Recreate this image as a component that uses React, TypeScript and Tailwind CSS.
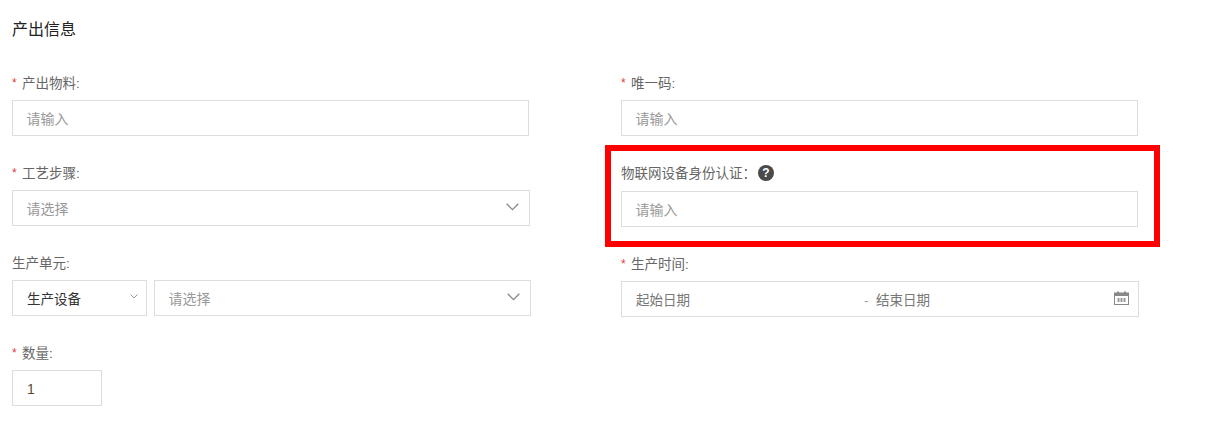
type FieldProps = {
  label: string;
  required?: boolean;
  help?: boolean;
  className?: string;
  children: React.ReactNode;
};

function Field({ label, required, help, className, children }: FieldProps) {
  return (
    <div className={className}>
      <div className="h-[18px] mb-2 pt-[2px] flex items-center text-[13.5px] leading-[18px] text-[#666]">
        {required && <span className="w-[10px] mb-[3px] text-[#e4393c] text-xs">*</span>}
        <span>{label}</span>
        {help && (
          <span className="ml-[2px] mb-[2px] w-4 h-4 rounded-full bg-[#4a4a4a] text-white text-xs font-bold flex items-center justify-center">
            ?
          </span>
        )}
      </div>
      {children}
    </div>
  );
}

function Box({ className, children }: { className?: string; children?: React.ReactNode }) {
  return (
    <div className={`h-9 pt-1 border border-[#ddd] bg-white flex items-center ${className ?? ""}`}>
      {children}
    </div>
  );
}

function Hint({ text }: { text: string }) {
  return <span className="mb-[2px] text-sm text-[#999]">{text}</span>;
}

function Chevron({ small }: { small?: boolean }) {
  return small ? (
    <svg width="8" height="5" viewBox="0 0 8 5" fill="none" stroke="#999" strokeWidth="1" className="mb-[7px]">
      <path d="M0.5 0.5L4 4l3.5-3.5" />
    </svg>
  ) : (
    <svg width="13" height="8" viewBox="0 0 13 8" fill="none" stroke="#888" strokeWidth="1.3" className="mb-[6px]">
      <path d="M0.7 0.8L6.5 6.6l5.8-5.8" />
    </svg>
  );
}

function CalendarIcon() {
  return (
    <svg width="15" height="14" viewBox="0 0 15 14" fill="none" className="mb-[7px]">
      <rect x="0.5" y="2" width="14" height="11.5" stroke="#888" />
      <rect x="0.5" y="2" width="14" height="3" fill="#888" />
      <rect x="3" y="0.5" width="2" height="2" fill="#888" />
      <rect x="10" y="0.5" width="2" height="2" fill="#888" />
      <rect x="3.5" y="7" width="2" height="4" fill="#999" />
      <rect x="6.5" y="7" width="2" height="4" fill="#999" />
      <rect x="9.5" y="7" width="2" height="4" fill="#999" />
    </svg>
  );
}

export default function App() {
  return (
    <div className="relative h-[432px] w-[1206px] overflow-hidden bg-white font-['Liberation_Sans','Noto_Sans_CJK_SC',sans-serif]">
      <div className="pt-5 pl-3 h-[74px] text-base leading-5 text-[#222]">产出信息</div>
      <div className="flex">
        <div className="w-[621px] pl-3">
          <Field label="产出物料:" required className="mb-7">
            <Box className="w-[517px] pl-[13.5px]"><Hint text="请输入" /></Box>
          </Field>
          <Field label="工艺步骤:" required className="mb-7">
            <Box className="w-[518px] pl-[13.5px] pr-[10px] justify-between">
              <Hint text="请选择" />
              <Chevron />
            </Box>
          </Field>
          <Field label="生产单元:" className="mb-7">
            <div className="flex gap-[7px]">
              <Box className="w-[135px] pl-[14px] pr-2 justify-between text-[13.5px] text-[#333]">
                生产设备
                <Chevron small />
              </Box>
              <Box className="w-[377px] pl-[13.5px] pr-[10px] justify-between">
                <Hint text="请选择" />
                <Chevron />
              </Box>
            </div>
          </Field>
          <Field label="数量:" required>
            <Box className="w-[90px] pl-[14px] text-sm text-[#5c4a2a]">
              <span className="mb-[2px]">1</span>
            </Box>
          </Field>
        </div>
        <div>
          <Field label="唯一码:" required className="mb-7">
            <Box className="w-[517px] pl-[13.5px]"><Hint text="请输入" /></Box>
          </Field>
          <Field label="物联网设备身份认证：" help className="mb-7">
            <div className="pt-px">
              <Box className="w-[517px] pl-[13.5px]"><Hint text="请输入" /></Box>
            </div>
          </Field>
          <Field label="生产时间:" required>
            <Box className="w-[518px] pl-[14px] pr-[9px] text-[13.5px] text-[#999]">
              <span className="w-[228px] text-[#777]">起始日期</span>
              <span className="w-[12px]">-</span>
              <span className="flex-1 text-[#777]">结束日期</span>
              <CalendarIcon />
            </Box>
          </Field>
        </div>
      </div>
      <div className="absolute left-[605px] top-[145px] w-[555px] h-[102px] border-[6px] border-[#ff0000]" />
    </div>
  );
}
